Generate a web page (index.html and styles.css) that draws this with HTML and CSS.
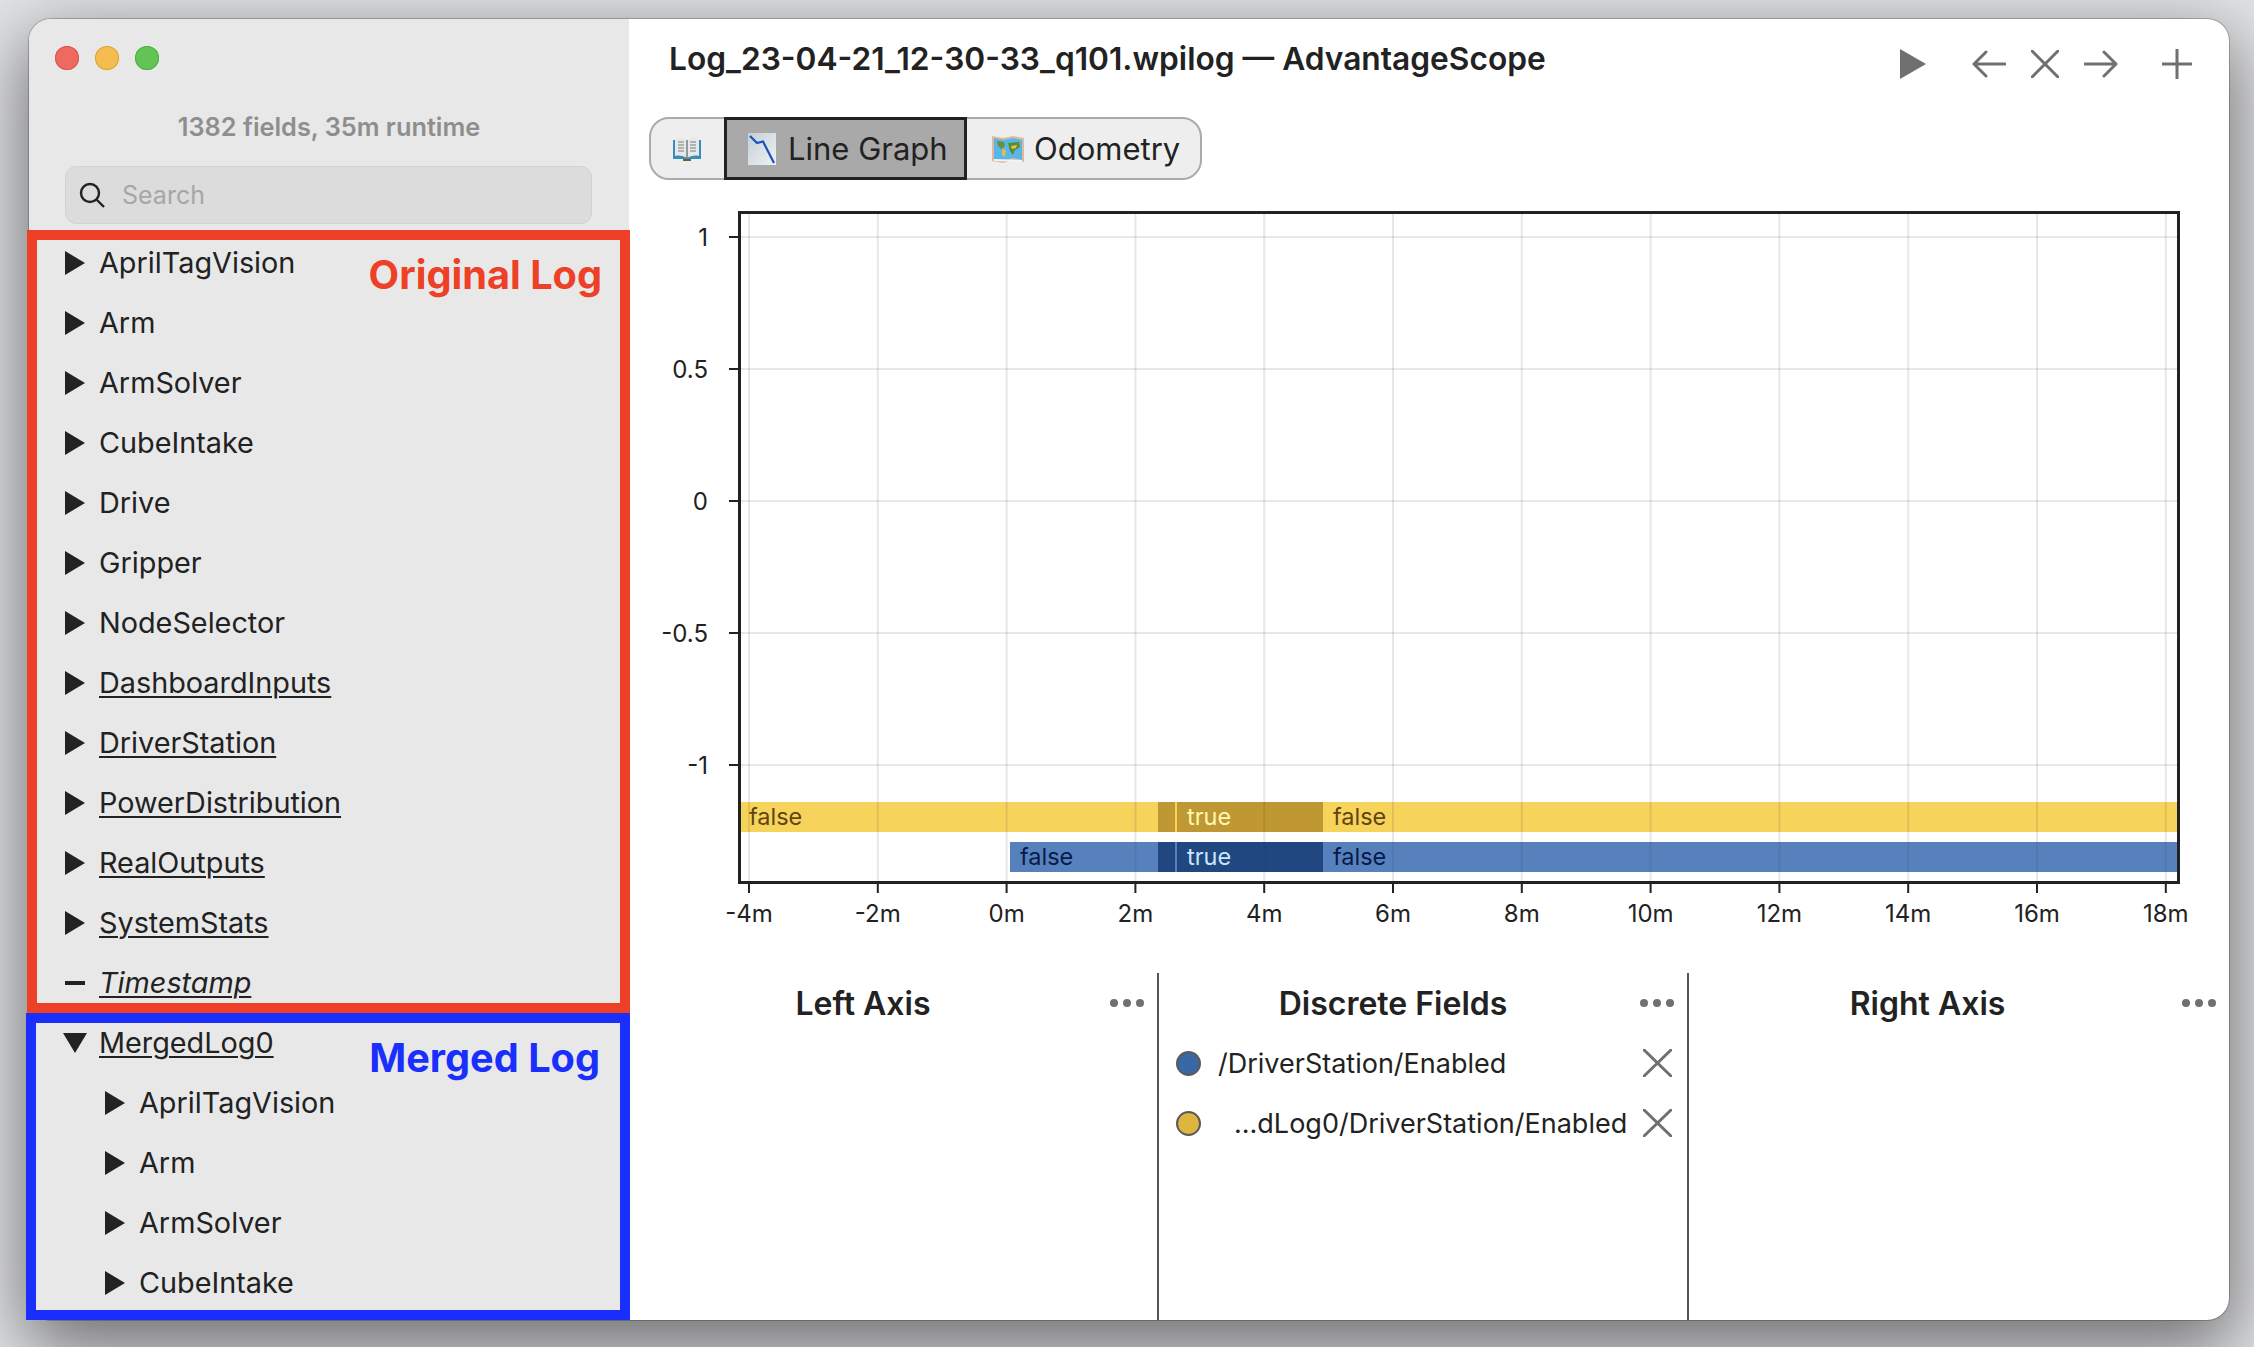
FILE: index.html
```html
<!DOCTYPE html>
<html lang="en">
<head>
  <meta charset="UTF-8" />
  <title>AdvantageScope</title>
  <link rel="stylesheet" href="styles.css">
</head>
<body>
  <div class="window">

    <!-- Sidebar with the log fields -->
    <aside class="sidebar">
      <div class="traffic-lights">
        <span class="light light-red"></span>
        <span class="light light-yellow"></span>
        <span class="light light-green"></span>
      </div>
      <div class="status">1382 fields, 35m runtime</div>
      <div class="search">
        <svg class="search-icon" viewBox="0 0 26 26">
          <circle cx="11" cy="11" r="9" />
          <path d="M17.5 17.5 L25 25" />
        </svg>
        <span>Search</span>
      </div>
      <ul class="tree">
        <li class="row"><i class="arrow"></i><span>AprilTagVision</span></li>
        <li class="row"><i class="arrow"></i><span>Arm</span></li>
        <li class="row"><i class="arrow"></i><span>ArmSolver</span></li>
        <li class="row"><i class="arrow"></i><span>CubeIntake</span></li>
        <li class="row"><i class="arrow"></i><span>Drive</span></li>
        <li class="row"><i class="arrow"></i><span>Gripper</span></li>
        <li class="row"><i class="arrow"></i><span>NodeSelector</span></li>
        <li class="row"><i class="arrow"></i><span class="logged">DashboardInputs</span></li>
        <li class="row"><i class="arrow"></i><span class="logged">DriverStation</span></li>
        <li class="row"><i class="arrow"></i><span class="logged">PowerDistribution</span></li>
        <li class="row"><i class="arrow"></i><span class="logged">RealOutputs</span></li>
        <li class="row"><i class="arrow"></i><span class="logged">SystemStats</span></li>
        <li class="row"><i class="dash"></i><span class="logged timestamp">Timestamp</span></li>
        <li class="row"><i class="arrow-down"></i><span class="logged">MergedLog0</span></li>
        <li class="row child"><i class="arrow"></i><span>AprilTagVision</span></li>
        <li class="row child"><i class="arrow"></i><span>Arm</span></li>
        <li class="row child"><i class="arrow"></i><span>ArmSolver</span></li>
        <li class="row child"><i class="arrow"></i><span>CubeIntake</span></li>
      </ul>
    </aside>

    <main class="content">
      <header class="titlebar">
        <h1>Log_23-04-21_12-30-33_q101.wpilog — AdvantageScope</h1>
        <div class="toolbar">
          <svg class="tool tool-play" viewBox="0 0 26 30"><path d="M0 0 L26 15 L0 30 Z" /></svg>
          <svg class="tool tool-back" viewBox="0 0 34 28"><path d="M33 14 H2 M14 2 L2 14 L14 26" /></svg>
          <svg class="tool tool-close" viewBox="0 0 28 28"><path d="M1 1 L27 27 M27 1 L1 27" /></svg>
          <svg class="tool tool-next" viewBox="0 0 34 28"><path d="M1 14 H32 M20 2 L32 14 L20 26" /></svg>
          <svg class="tool tool-add" viewBox="0 0 30 30"><path d="M15 0 V30 M0 15 H30" /></svg>
        </div>
      </header>

      <nav class="tabs">
        <div class="tab tab-docs">
          <svg class="emoji-book" viewBox="0 0 30 24">
            <path d="M1 3 H29 V22 H1 Z" fill="#3a8cbb" />
            <path d="M11 22 H19 V24 H11 Z" fill="#7a5c26" />
            <path d="M3 1 C7 0 12 1 15 3 C18 1 23 0 27 1 V19 C23 18 18 19 15 21 C12 19 7 18 3 19 Z" fill="#e6e9e8" />
            <path d="M15 3 V21" stroke="#6f7678" stroke-width="1.4" />
            <path d="M6 5 H12 M6 8 H12 M6 11 H12 M6 14 H12 M18 5 H24 M18 8 H24 M18 11 H24 M18 14 H24" stroke="#9aa0a0" stroke-width="1.4" />
          </svg>
        </div>
        <div class="tab tab-active">
          <svg class="emoji-chart" viewBox="0 0 28 32">
            <defs>
              <linearGradient id="chart-card" x1="0" y1="0" x2="1" y2="1">
                <stop offset="0" stop-color="#c3d0d6" />
                <stop offset="1" stop-color="#eef2f4" />
              </linearGradient>
            </defs>
            <rect width="28" height="32" fill="url(#chart-card)" />
            <path d="M2 3 L9 10 L15 8.500 L26 30" fill="none" stroke="#1b50c0" stroke-width="2.200" />
          </svg>
          <span>Line Graph</span>
        </div>
        <div class="tab">
          <svg class="emoji-map" viewBox="0 0 32 28">
            <path d="M0 1 L11 3 L21 1 L32 3 V27 L21 25 L11 28 L0 26 Z" fill="#e0b99c" />
            <path d="M2 3 L11 5 L21 3 L30 5 V25 L21 23 L11 26 L2 24 Z" fill="#58b6e8" />
            <path d="M5 6 L12 7 L13 11 L9 14 L6 11 Z" fill="#6d8f3a" />
            <path d="M10 14 L14 15 L13 22 L10 20 Z" fill="#d8c24a" />
            <path d="M16 8 L27 7 L28 12 L23 15 L21 20 L18 16 L17 12 Z" fill="#5d8a36" />
            <path d="M19 11 L25 10 L24 13 L20 14 Z" fill="#e3c63f" />
            <path d="M2 24 L30 25 V27 L2 26 Z" fill="#f2f4f4" />
          </svg>
          <span>Odometry</span>
        </div>
      </nav>

      <!-- Line graph -->
      <svg class="plot" viewBox="0 0 1552 730">
        <rect class="bar-yellow" x="91" y="601" width="1437" height="30" />
        <rect class="bar-yellow-dark" x="509" y="601" width="17" height="30" />
        <rect class="bar-yellow-dark" x="528" y="601" width="146" height="30" />
        <rect class="bar-blue" x="361" y="641" width="1167" height="30" />
        <rect class="bar-blue-dark" x="509" y="641" width="17" height="30" />
        <rect class="bar-blue-dark" x="528" y="641" width="146" height="30" />

        <path class="grid" d="M100 12 V681 M228.800 12 V681 M357.600 12 V681 M486.400 12 V681 M615.200 12 V681 M744 12 V681 M872.800 12 V681 M1001.600 12 V681 M1130.400 12 V681 M1259.200 12 V681 M1388 12 V681 M1516.800 12 V681" />
        <path class="grid" d="M91 36 H1529 M91 168 H1529 M91 300 H1529 M91 432 H1529 M91 564 H1529" />
        <rect class="frame" x="90.500" y="11.500" width="1439" height="670" />
        <path class="tick" d="M80 36 H90 M80 168 H90 M80 300 H90 M80 432 H90 M80 564 H90" />
        <path class="tick" d="M100 682 V692 M228.800 682 V692 M357.600 682 V692 M486.400 682 V692 M615.200 682 V692 M744 682 V692 M872.800 682 V692 M1001.600 682 V692 M1130.400 682 V692 M1259.200 682 V692 M1388 682 V692 M1516.800 682 V692" />

        <text class="axis-y" x="59" y="36">1</text>
        <text class="axis-y" x="59" y="168">0.5</text>
        <text class="axis-y" x="59" y="300">0</text>
        <text class="axis-y" x="59" y="432">-0.5</text>
        <text class="axis-y" x="59" y="564">-1</text>

        <text class="axis-x" x="100" y="712">-4m</text>
        <text class="axis-x" x="228.800" y="712">-2m</text>
        <text class="axis-x" x="357.600" y="712">0m</text>
        <text class="axis-x" x="486.400" y="712">2m</text>
        <text class="axis-x" x="615.200" y="712">4m</text>
        <text class="axis-x" x="744" y="712">6m</text>
        <text class="axis-x" x="872.800" y="712">8m</text>
        <text class="axis-x" x="1001.600" y="712">10m</text>
        <text class="axis-x" x="1130.400" y="712">12m</text>
        <text class="axis-x" x="1259.200" y="712">14m</text>
        <text class="axis-x" x="1388" y="712">16m</text>
        <text class="axis-x" x="1516.800" y="712">18m</text>

        <text class="label label-brown" x="100" y="615.500">false</text>
        <text class="label label-cream" x="538" y="615.500">true</text>
        <text class="label label-brown" x="684" y="615.500">false</text>
        <text class="label label-navy" x="371" y="655.500">false</text>
        <text class="label label-ice" x="538" y="655.500">true</text>
        <text class="label label-navy" x="684" y="655.500">false</text>
      </svg>

      <!-- Axis editor -->
      <section class="axes">
        <div class="axis axis-left">
          <div class="axis-head">
            <h2>Left Axis</h2>
            <div class="dots"><i></i><i></i><i></i></div>
          </div>
        </div>
        <div class="axis axis-mid">
          <div class="axis-head">
            <h2>Discrete Fields</h2>
            <div class="dots"><i></i><i></i><i></i></div>
          </div>
          <div class="field">
            <i class="swatch swatch-blue"></i>
            <span class="field-name">/DriverStation/Enabled</span>
            <svg class="field-remove" viewBox="0 0 29 28"><path d="M1 1 L28 27 M28 1 L1 27" /></svg>
          </div>
          <div class="field">
            <i class="swatch swatch-gold"></i>
            <span class="field-name field-cut">...dLog0/DriverStation/Enabled</span>
            <svg class="field-remove" viewBox="0 0 29 28"><path d="M1 1 L28 27 M28 1 L1 27" /></svg>
          </div>
        </div>
        <div class="axis axis-right">
          <div class="axis-head">
            <h2>Right Axis</h2>
            <div class="dots"><i></i><i></i><i></i></div>
          </div>
        </div>
      </section>
    </main>

    <!-- Annotations drawn over the screenshot -->
    <div class="note note-original"><span>Original Log</span></div>
    <div class="note note-merged"><span>Merged Log</span></div>
  </div>
</body>
</html>
```

FILE: styles.css
```css
/* Page background */
body {
  margin: 0;
  height: 1347px;
  overflow: hidden;
  background: #e2e3e5;
  font-family: Inter, "Noto Sans", sans-serif;
  color: #222;
}

/* Window */
.window {
  position: relative;
  display: flex;
  width: 2200px;
  height: 1301px;
  margin: 19px 0 0 29px;
  border-radius: 22px;
  background: white;
  box-shadow: 0 0 0 1px rgba(0,0,0,0.22), 0 24px 70px 6px rgba(0,0,0,0.5);
}

/* Sidebar */
.sidebar {
  width: 600px;
  flex: none;
  height: 1301px;
  overflow: hidden;
  background: #e8e8e9;
  border-radius: 22px 0 0 22px;
}

.traffic-lights {
  display: flex;
  gap: 16px;
  padding: 27px 0 0 26px;
}
.light {
  width: 24px;
  height: 24px;
  border-radius: 50%;
}
.light-red { background: #ee6a5f; box-shadow: inset 0 0 0 1px #d8574d; }
.light-yellow { background: #f5bd4f; box-shadow: inset 0 0 0 1px #dca33a; }
.light-green { background: #61c454; box-shadow: inset 0 0 0 1px #4fae43; }

.status {
  margin-top: 41px;
  height: 32px;
  line-height: 32px;
  text-align: center;
  font-size: 25.300px;
  font-weight: 600;
  color: #8e8e8e;
}

.search {
  display: flex;
  align-items: center;
  gap: 17px;
  width: 527px;
  height: 58px;
  margin: 23px 0 0 36px;
  padding-left: 13px;
  box-sizing: border-box;
  background: #dcdcdc;
  border: 1px solid #d2d2d2;
  border-radius: 11px;
  font-size: 25px;
  color: #a6a6a6;
}
.search-icon {
  width: 26px;
  height: 26px;
  fill: none;
  stroke: #222;
  stroke-width: 2.4;
}

/* Field tree */
.tree {
  list-style: none;
  margin: 9px 0 0;
  padding: 0;
}
.row {
  display: flex;
  align-items: center;
  height: 60px;
  padding-left: 36px;
  font-size: 28.800px;
}
.row span {
  margin: 0 0 2px 14px;
}
.row.child {
  padding-left: 76px;
}
.logged {
  text-decoration: underline;
  text-decoration-thickness: 2px;
  text-underline-offset: 3px;
}
.timestamp {
  font-style: italic;
}
.arrow {
  width: 0;
  height: 0;
  border-left: 20px solid #222;
  border-top: 12px solid transparent;
  border-bottom: 12px solid transparent;
}
.arrow-down {
  width: 0;
  height: 0;
  margin-left: -2px;
  margin-right: -2px;
  border-top: 20px solid #222;
  border-left: 12px solid transparent;
  border-right: 12px solid transparent;
}
.dash {
  width: 20px;
  height: 4px;
  background: #222;
}

/* Main area */
.content {
  flex: 1;
  min-width: 0;
  display: flex;
  flex-direction: column;
}

.titlebar {
  display: flex;
  align-items: center;
  height: 77px;
  padding-left: 40px;
}
.titlebar h1 {
  flex: 1;
  margin: 2px 0 0;
  font-size: 31.700px;
  font-weight: 600;
}
.toolbar {
  display: flex;
  align-items: center;
  padding-right: 37px;
  margin-top: 12px;
}
.tool {
  display: block;
  fill: none;
  stroke: #707070;
  stroke-width: 3;
  stroke-linecap: round;
  stroke-linejoin: round;
}
.tool-play { width: 26px; height: 30px; fill: #707070; stroke: none; margin-right: 46px; }
.tool-back { width: 34px; height: 28px; margin-right: 25px; }
.tool-close { width: 28px; height: 28px; margin-right: 25px; }
.tool-next { width: 34px; height: 28px; margin-right: 44px; }
.tool-add { width: 30px; height: 30px; }

/* Tabs */
.tabs {
  display: flex;
  align-self: flex-start;
  height: 63px;
  margin: 21px 0 0 20px;
  box-sizing: border-box;
  border: 2px solid #ababab;
  border-radius: 20px;
  background: #eeeeee;
}
.tab {
  display: flex;
  align-items: center;
  gap: 12px;
  padding: 0 20px 0 21px;
  font-size: 31px;
  white-space: nowrap;
  border-left: 2px solid #ababab;
}
.tab svg {
  flex: none;
}
.tab-docs {
  width: 73px;
  padding: 0 0 0 21px;
  box-sizing: border-box;
  border-left: none;
}
.tab-active {
  flex: none;
  width: 243px;
  height: 63px;
  margin: -2px 0;
  box-sizing: border-box;
  padding: 0 0 0 21px;
  border: 3px solid #222;
  background: #a9a9a9;
}
.tab-active + .tab {
  border-left: none;
  padding-left: 25px;
  gap: 10px;
}
.emoji-book { width: 30px; height: 24px; }
.emoji-chart { width: 28px; height: 32px; }
.emoji-map { width: 32px; height: 28px; }

/* Plot */
.plot {
  display: block;
  width: 1552px;
  height: 730px;
  margin: 21px 0 0 20px;
}
.plot text {
  font-family: Inter, "Noto Sans", sans-serif;
  font-size: 24px;
  fill: #222;
  dominant-baseline: central;
}
.plot .label { font-size: 23.500px; }
.grid { fill: none; stroke: rgba(60,60,60,0.12); stroke-width: 2; }
.frame { fill: none; stroke: #222; stroke-width: 3; }
.tick { fill: none; stroke: #222; stroke-width: 2; }
.bar-yellow { fill: #f6d35b; }
.bar-yellow-dark { fill: #bf9833; }
.bar-blue { fill: #5781bd; }
.bar-blue-dark { fill: #20477f; }
.plot .axis-y { text-anchor: end; }
.plot .axis-x { text-anchor: middle; }
.plot .label-brown { fill: #614512; }
.plot .label-cream { fill: #fff8b0; }
.plot .label-navy { fill: #071a4a; }
.plot .label-ice { fill: #c8e6ff; }

/* Axis editor */
.axes {
  display: flex;
  flex: 1;
  min-height: 0;
  margin-top: 42px;
}
.axis {
  box-sizing: border-box;
  border-left: 2px solid #555;
}
.axis-left { width: 528px; border-left: none; }
.axis-mid { width: 530px; }
.axis-right { flex: 1; }

.axis-head {
  position: relative;
  display: flex;
  align-items: center;
  height: 60px;
  padding-right: 60px;
}
.axis-head h2 {
  flex: 1;
  margin: 0;
  text-align: center;
  font-size: 32px;
  font-weight: 600;
}
.axis-right h2 { margin-right: 3px; }
.dots {
  position: absolute;
  right: 13px;
  display: flex;
  gap: 5px;
}
.dots i {
  width: 8px;
  height: 8px;
  border-radius: 50%;
  background: #707070;
}

.field {
  display: flex;
  align-items: center;
  height: 60px;
  padding: 0 15px 0 17px;
  font-size: 27px;
}
.swatch {
  flex: none;
  width: 25px;
  height: 25px;
  box-sizing: border-box;
  border: 2px solid #5a5a5a;
  border-radius: 50%;
}
.swatch-blue { background: #3a68a5; }
.swatch-gold { background: #deb63f; }
.field-name {
  flex: 1;
  margin-left: 17px;
}
.field-cut { margin-left: 33px; }
.field-remove {
  flex: none;
  width: 29px;
  height: 28px;
  fill: none;
  stroke: #707070;
  stroke-width: 3;
  stroke-linecap: round;
}

/* Annotation boxes */
.note {
  position: absolute;
  box-sizing: border-box;
  display: flex;
  justify-content: flex-end;
  border-style: solid;
  border-width: 10px;
  font-size: 39.700px;
  font-weight: 700;
}
.note-original {
  left: -2px;
  top: 211px;
  width: 603px;
  height: 783px;
  border-color: #ee4026;
  color: #ee4026;
}
.note-merged {
  left: -3px;
  top: 994px;
  width: 604px;
  height: 307px;
  border-color: #1a2ffb;
  color: #1a2ffb;
}
.note span {
  height: 48px;
  line-height: 48px;
  margin: 11px 18px 0 0;
}
.note-merged span { margin-right: 20px; }
```
